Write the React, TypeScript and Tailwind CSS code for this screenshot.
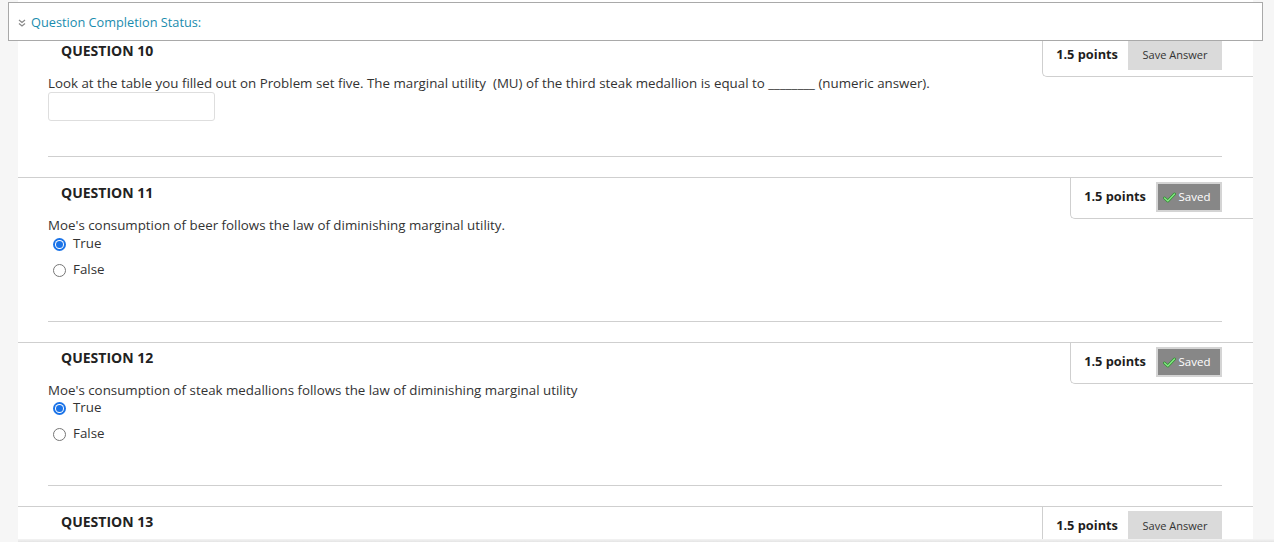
import React from "react";

const font = { fontFamily: '"Open Sans", "Noto Sans", sans-serif' };

function PointsBox({ saved }: { saved: boolean }) {
  return (
    <div className="flex items-center border-l border-b border-[#cfcfcf] rounded-bl-[5px] bg-white pl-[13px] pr-[31px] pt-[4px] pb-[6px] h-[41px] shrink-0">
      <span className="text-[12.8px] font-bold text-[#1e1e1e] leading-[18px] mb-[3px]">1.5 points</span>
      {saved ? (
        <span className="ml-[10px] flex items-center justify-center h-[30px] w-[66px] bg-[#878787] border-2 border-[#d4d4d4] text-white text-[11.5px] pr-[5px]">
          <svg width="13" height="11" viewBox="0 0 13 11" className="mr-[3px]">
            <path d="M1.5 6 L4.8 9 L11.5 2" fill="none" stroke="#2f8f2f" strokeWidth="2.8" strokeLinecap="round" strokeLinejoin="round" />
            <path d="M1.5 6 L4.8 9 L11.5 2" fill="none" stroke="#86e886" strokeWidth="1.4" strokeLinecap="round" strokeLinejoin="round" />
          </svg>
          Saved
        </span>
      ) : (
        <span className="ml-[10px] flex items-center justify-center h-[30px] w-[94px] bg-[#dadada] text-[#333] text-[11px]">
          Save Answer
        </span>
      )}
    </div>
  );
}

function Radio({ checked, label }: { checked: boolean; label: string }) {
  return (
    <label className="flex items-center h-[18px] text-[13.33px] text-[#333]">
      {checked ? (
        <span className="ml-[5px] w-[13px] h-[13px] rounded-full bg-[#1a73e8] flex items-center justify-center">
          <span className="w-[9px] h-[9px] rounded-full bg-white flex items-center justify-center">
            <span className="w-[7px] h-[7px] rounded-full bg-[#1a73e8]" />
          </span>
        </span>
      ) : (
        <span className="ml-[5px] w-[13px] h-[13px] rounded-full border border-[#767676] bg-white" />
      )}
      <span className="ml-[7px]">{label}</span>
    </label>
  );
}

function Section({
  num,
  saved,
  children,
  last,
}: {
  num: number;
  saved: boolean;
  children?: React.ReactNode;
  last?: boolean;
}) {
  return (
    <div className="border-t border-[#cfcfcf]">
      <div className="flex justify-between items-start h-[38px]">
        <div className="pl-[43px] pt-[5px] text-[14px] leading-[20px] font-bold text-[#222]">QUESTION {num}</div>
        <PointsBox saved={saved} />
      </div>
      {!last && <div className="pl-[30px] pr-[31px]">{children}</div>}
    </div>
  );
}

export default function App() {
  return (
    <div className="relative h-[542px] w-[1274px] overflow-hidden bg-[#f6f6f6]" style={font}>
      <div className="ml-[18px] w-[1235px] bg-white pt-[35px] h-[600px]">
        <Section num={10} saved={false}>
          <p className="text-[13.33px] leading-[18px] text-[#333]">
            Look at the table you filled out on Problem set five. The marginal utility&nbsp; (MU) of the third steak medallion is equal to ________ (numeric answer).
          </p>
          <div className="w-[167px] h-[29px] border border-[#dedede] rounded-[3px] bg-white" />
          <div className="mt-[35px] h-px bg-[#cfcfcf]" />
          <div className="h-[20px]" />
        </Section>
        <Section num={11} saved={true}>
          <p className="text-[13.33px] leading-[18px] text-[#333]">
            Moe's consumption of beer follows the law of diminishing marginal utility.
          </p>
          <div className="mt-[1px]">
            <Radio checked={true} label="True" />
          </div>
          <div className="mt-[8px]">
            <Radio checked={false} label="False" />
          </div>
          <div className="mt-[42px] h-px bg-[#cfcfcf]" />
          <div className="h-[20px]" />
        </Section>
        <Section num={12} saved={true}>
          <p className="text-[13.33px] leading-[18px] text-[#333]">
            Moe's consumption of steak medallions follows the law of diminishing marginal utility
          </p>
          <Radio checked={true} label="True" />
          <div className="mt-[8px]">
            <Radio checked={false} label="False" />
          </div>
          <div className="mt-[42px] h-px bg-[#cfcfcf]" />
          <div className="h-[20px]" />
        </Section>
        <Section num={13} saved={false} last />
      </div>

      <div className="absolute left-[8px] top-[2px] w-[1255px] h-[39px] border border-[#a9a9a9] bg-white flex items-center pl-[9px] pt-[2px]">
        <svg width="8" height="8" viewBox="0 0 8 8" className="mr-[5px] mt-[1px]">
          <path d="M1 1 L4 3.5 L7 1 M1 4.5 L4 7 L7 4.5" fill="none" stroke="#888" strokeWidth="1.2" />
        </svg>
        <span className="text-[12.75px] text-[#1a8cae]">Question Completion Status:</span>
      </div>

      <div className="absolute left-[18px] bottom-0 w-[1256px] h-[3px] bg-gradient-to-b from-[#f4f4f4] to-[#e4e4e4]" />
    </div>
  );
}
